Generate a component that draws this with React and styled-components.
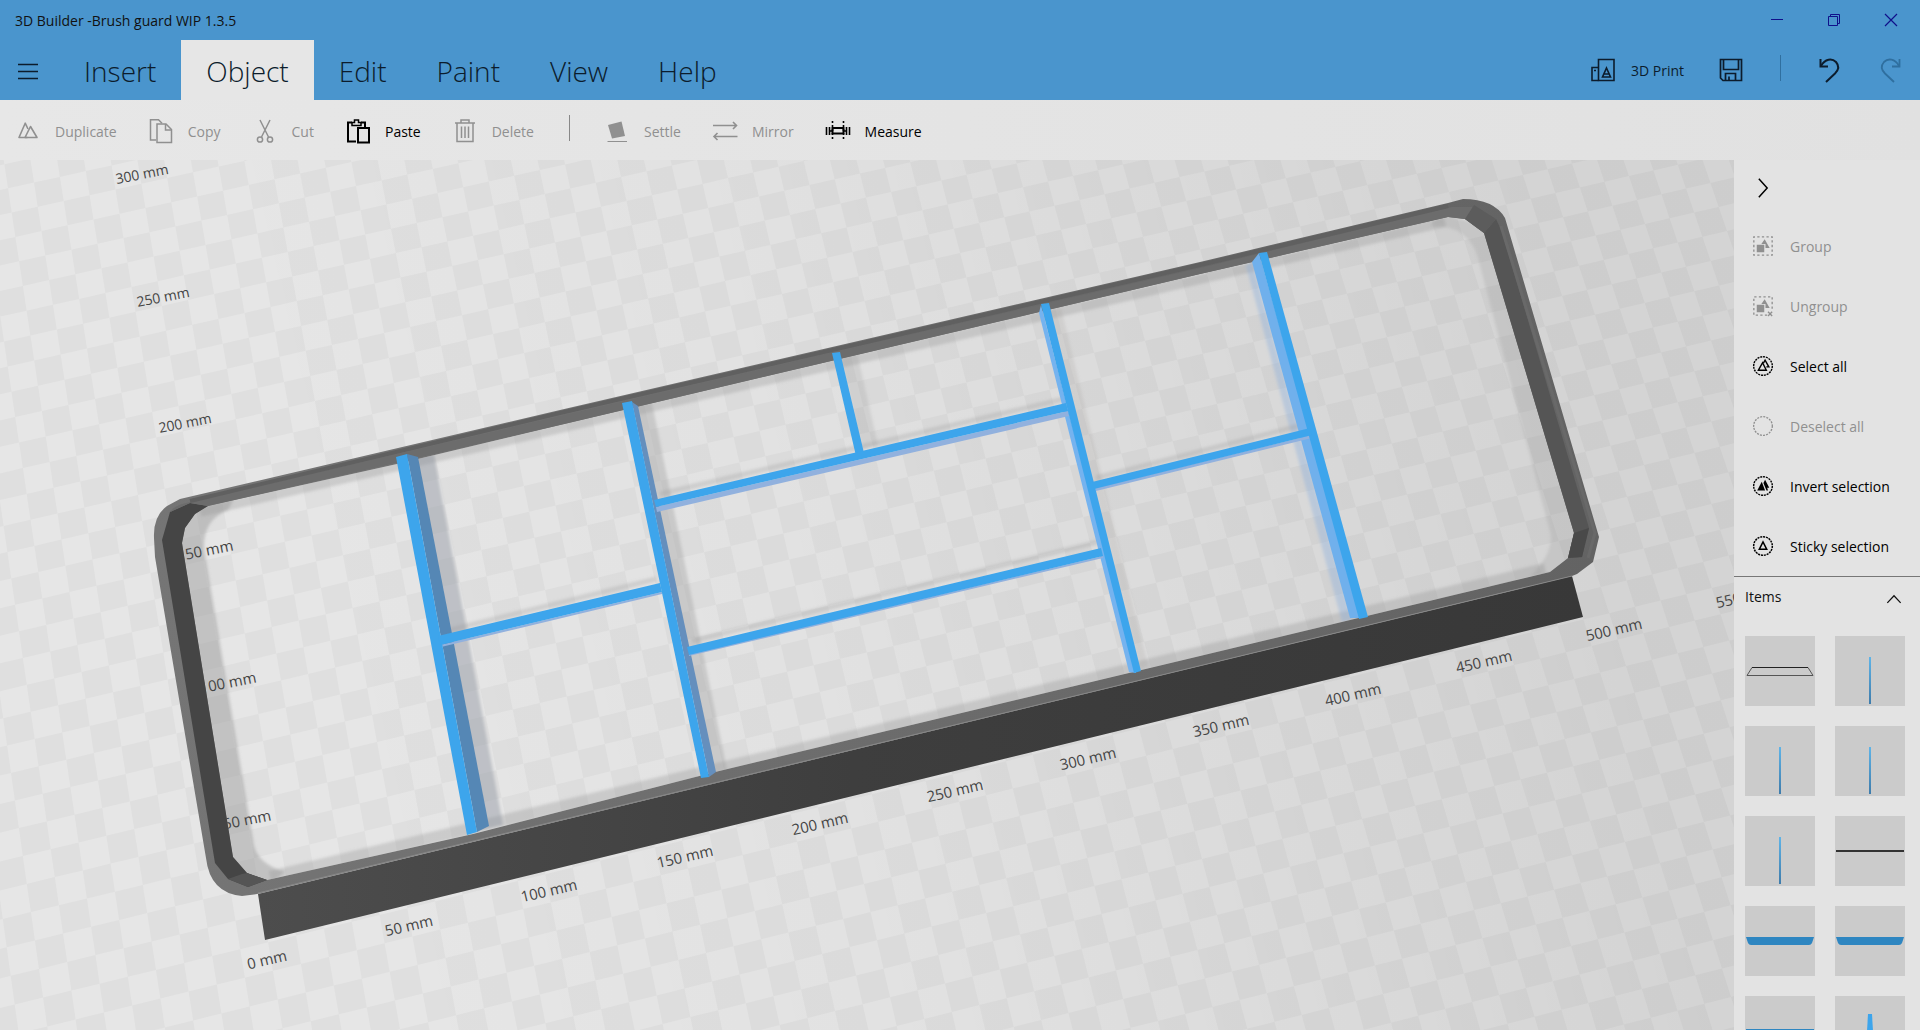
import React from "react";
import styled, { createGlobalStyle } from "styled-components";

const tabs = ["Insert", "Object", "Edit", "Paint", "View", "Help"];

const icons = {
  duplicate: (
    <g fill="none" stroke="currentColor" strokeWidth="1.6" strokeLinejoin="round">
      <path d="M11.5 18.5H3L9.2 4.2L12 10" />
      <path d="M9 18.5L14.5 7.5L21 18.5Z" />
    </g>
  ),
  copy: (
    <g fill="none" stroke="currentColor" strokeWidth="1.5">
      <path d="M7 21H1.5V.8H9.5L13 4.2" />
      <path d="M8 5H17L22.5 10.5V23.5H8Z" />
      <path d="M16.5 5V11H22.5" />
    </g>
  ),
  cut: (
    <g fill="none" stroke="currentColor" strokeWidth="1.5">
      <path d="M7 1L15.5 18M17 1L8.5 18" />
      <circle cx="7" cy="20.5" r="2.6" />
      <circle cx="17" cy="20.5" r="2.6" />
    </g>
  ),
  paste: (
    <g fill="none" stroke="currentColor" strokeWidth="2">
      <path d="M10 22.5H2V3.5H6M15 3.5H19V8" />
      <path d="M6 6.5V3.5H8.5V1H12.5V3.5H15V6.5Z" strokeWidth="1.5" />
      <path d="M12 9H23V23.5H12Z" />
    </g>
  ),
  delete: (
    <g fill="none" stroke="currentColor" strokeWidth="1.5">
      <path d="M2 4H22M8 4V1H16V4M4 4V22.5H20V4" />
      <path d="M8.500 7.500V19M12 7.500V19M15.500 7.500V19" />
    </g>
  ),
  settle: (
    <g>
      <path d="M3 6L16.500 2.500L20 17L7 19.500Z" fill="currentColor" />
      <path d="M2.500 22.500H22" stroke="currentColor" strokeWidth="1" />
    </g>
  ),
  mirror: (
    <g fill="none" stroke="currentColor" strokeWidth="1.6">
      <path d="M0 6.500H23.500M20 3L23.500 6.500L20 10" />
      <path d="M24.500 17.500H1M4.500 14L1 17.500L4.500 21" />
    </g>
  ),
  measure: (
    <g fill="none" stroke="currentColor">
      <path d="M6.500 9H17.500V14.500H6.500Z" strokeWidth="2" />
      <path d="M.5 8V16M3.500 8V16M20.500 8V16M23.500 8V16" strokeWidth="1.6" />
      <path d="M6.500 2V22M17.500 2V22" strokeWidth="1.6" strokeDasharray="2 2" />
      <path d="M3 12H6M18 12H21" strokeWidth="1.6" />
    </g>
  ),
  print: (
    <g fill="none" stroke="currentColor" strokeWidth="1.6">
      <path d="M7.500 1.500H23V22.500H7.500Z" />
      <path d="M7.500 9.500H1V22.500H7.500M3 12.500H5" />
      <path d="M15.500 10L19.500 19H11.500ZM13 16H18" />
    </g>
  ),
  save: (
    <g fill="none" stroke="currentColor" strokeWidth="1.7">
      <path d="M1.500 1.500H22.500V22.500H4L1.500 20Z" />
      <path d="M4.500 2V11.500H19.500V2" />
      <path d="M6.500 22.500V15.500H16.500V22.500M10 18.500V22.500" />
    </g>
  ),
  undo: (
    <g fill="none" stroke="currentColor" strokeWidth="2">
      <path d="M2.500 1V8.500H10" />
      <path d="M3 8C7 .5 14 0 18 4C21.500 8 20.500 12 17 15.500L8 24" />
    </g>
  ),
  redo: (
    <g fill="none" stroke="currentColor" strokeWidth="1.8">
      <path d="M21.500 1V8.500H14" />
      <path d="M21 8C17 .5 10 0 6 4C2.500 8 3.500 12 7 15.500L16 24" />
    </g>
  ),
  group: (
    <g>
      <path d="M1 1H23V23H1Z" fill="none" stroke="currentColor" strokeWidth="1.6" strokeDasharray="2.750 2.750" strokeDashoffset="1.370" />
      <path d="M4.500 10.500H13.500V19.500H4.500ZM10 9.500L14 4L20 14.500H15V9.500Z" fill="currentColor" />
    </g>
  ),
  ungroup: (
    <g>
      <path d="M17 23H1V1H23V17" fill="none" stroke="currentColor" strokeWidth="1.6" strokeDasharray="2.750 2.750" />
      <path d="M4.500 10.500H13.500V19.500H4.500ZM10 9.500L14 4L20 14.500H15V9.500Z" fill="currentColor" />
      <path d="M18 19L23 24M23 19L18 24" stroke="currentColor" strokeWidth="1.6" />
    </g>
  ),
  selectAll: (
    <g fill="none" stroke="currentColor" strokeWidth="1.7">
      <circle cx="12" cy="12" r="11.200" strokeDasharray="2.500 1" />
      <path d="M6.500 17L11.500 8L16 17Z" />
      <path d="M12.500 8.500L14.500 5L19 13H16" />
    </g>
  ),
  deselectAll: (
    <circle cx="12" cy="12" r="11.200" fill="none" stroke="currentColor" strokeWidth="1.6" strokeDasharray="2.400 1.370" />
  ),
  invert: (
    <g>
      <circle cx="12" cy="12" r="11.200" fill="none" stroke="currentColor" strokeWidth="1.7" strokeDasharray="2.500 1" />
      <path d="M5 17.500L10.500 7L14.500 17.500Z" fill="currentColor" />
      <path d="M12.500 8.500L14.500 4.500L19.500 14H17L18 17.500H16.200Z" fill="currentColor" />
    </g>
  ),
  sticky: (
    <g fill="none" stroke="currentColor" strokeWidth="1.8">
      <circle cx="12" cy="12" r="11.200" strokeDasharray="2.500 1" />
      <path d="M7.500 16L12 7L16.500 16Z" />
    </g>
  ),
  chevronRight: <path d="M7 1L17 12L7 23" fill="none" stroke="currentColor" strokeWidth="1.8" />,
  chevronUp: <path d="M4 19L12 10.500L20 19" fill="none" stroke="currentColor" strokeWidth="1.5" />,
  hamburger: <path d="M2 6.500H22M2 13.500H22M2 20.500H22" stroke="currentColor" strokeWidth="1.3" />,
  minimize: <path d="M5 11.500H17" stroke="currentColor" strokeWidth="1" />,
  restore: (
    <g fill="none" stroke="currentColor" strokeWidth="1">
      <path d="M5.500 8.500H14.500V17.500H5.500Z" />
      <path d="M7.500 8.500V6.500H16.500V15.500H14.500" />
    </g>
  ),
  close: <path d="M5 6L17 18M17 6L5 18" stroke="currentColor" strokeWidth="1.2" />
};

const editTools = [
  { icon: "duplicate", label: "Duplicate", disabled: true },
  { icon: "copy", label: "Copy", disabled: true },
  { icon: "cut", label: "Cut", disabled: true },
  { icon: "paste", label: "Paste" },
  { icon: "delete", label: "Delete", disabled: true }
];

const objectTools = [
  { icon: "settle", label: "Settle", disabled: true },
  { icon: "mirror", label: "Mirror", disabled: true },
  { icon: "measure", label: "Measure" }
];

const panelActions = [
  { icon: "group", label: "Group", disabled: true },
  { icon: "ungroup", label: "Ungroup", disabled: true },
  { icon: "selectAll", label: "Select all" },
  { icon: "deselectAll", label: "Deselect all", disabled: true },
  { icon: "invert", label: "Invert selection" },
  { icon: "sticky", label: "Sticky selection" }
];

const items = ["frame", "rod", "rod", "rod", "rod", "bar", "plate", "plate", "slab", "spike"];

// The ground plane, in units of 10 mm, projected to the canvas
const project = (x, y) => {
  const u = x / 5;
  const v = y / 5;
  const d = 1 + 0.0042 * u + 0.0148 * v;
  return [
    (271 + 141.1 * u - 19.8 * v) / d,
    (959.4 - 30.4 * u - 128.3 * v) / d
  ];
};

const point = (x, y) =>
  project(x, y)
    .map(n => n.toFixed(1))
    .join(" ");

const buildChecker = () => {
  const cells = [];
  for (let i = -16; i < 72; i++) {
    for (let j = -24; j < 52; j++) {
      if ((i + j) % 2 === 0) continue;
      const y = j + 0.6;
      cells.push(
        `M${point(i, y)}L${point(i + 1, y)}L${point(i + 1, y + 1)}L${point(i, y + 1)}Z`
      );
    }
  }
  return cells.join("");
};

const checker = buildChecker();

const farLabels = [
  [142, 174, "300 mm"],
  [163, 297, "250 mm"],
  [185, 423, "200 mm"]
];

// these lie on the floor, partly behind the frame
const nearLabels = [
  [205, 551, "150 mm"],
  [228, 683, "100 mm"],
  [247, 820, "50 mm"]
];

const widthLabels = [
  [267, 960, "0 mm"],
  [409, 926, "50 mm"],
  [549, 891, "100 mm"],
  [685, 857, "150 mm"],
  [820, 824, "200 mm"],
  [955, 791, "250 mm"],
  [1088, 759, "300 mm"],
  [1221, 726, "350 mm"],
  [1353, 695, "400 mm"],
  [1484, 662, "450 mm"],
  [1614, 630, "500 mm"],
  [1744, 597, "550 mm"]
];

const floor =
  "M208 506L397 464L560 425L1200 274L1448 217L1465 219L1484 233L1574 533L1568 558L1550 572L1200 656L715 772L473 834L267 880L247 873L233 857L182 543L185 528L195 514Z";

function Icon({ name, size = 24 }) {
  return (
    <svg width={size} height={size} viewBox="0 0 24 24" overflow="visible" aria-hidden="true">
      {icons[name]}
    </svg>
  );
}

function AxisLabels({ labels, size, angle }) {
  return (
    <SceneText $size={size}>
      {labels.map(([x, y, text]) => (
        <text key={text} x={x} y={y + 5} transform={`rotate(${angle} ${x} ${y})`}>
          {text}
        </text>
      ))}
    </SceneText>
  );
}

function Scene() {
  return (
    <SceneSvg viewBox="0 160 1734 870" preserveAspectRatio="xMinYMin slice">
      <defs>
        <linearGradient id="shade" gradientUnits="userSpaceOnUse" x1="300" y1="620" x2="1560" y2="330">
          <stop offset="0" stopColor="#000" stopOpacity="0" />
          <stop offset="0.4" stopColor="#000" stopOpacity="0.02" />
          <stop offset="1" stopColor="#000" stopOpacity="0.08" />
        </linearGradient>
        <linearGradient id="front" x1="0" x2="1">
          <stop offset="0" stopColor="#4d4d4d" />
          <stop offset="0.45" stopColor="#3e3e3e" />
          <stop offset="1" stopColor="#383838" />
        </linearGradient>
        <linearGradient id="rim" x1="0" x2="1">
          <stop offset="0" stopColor="#757575" />
          <stop offset="1" stopColor="#636363" />
        </linearGradient>
        <filter id="soft" x="-5%" y="-5%" width="110%" height="110%">
          <feGaussianBlur stdDeviation="1.5" />
        </filter>
        <clipPath id="floorClip">
          <path d={floor} />
        </clipPath>
      </defs>

      <rect x="0" y="160" width="1735" height="870" fill="#e6e6e6" />
      <path d={checker} fill="#dfdfdf" />
      <rect x="0" y="160" width="1735" height="870" fill="url(#shade)" />

      {/* shadows on the ground */}
      <g clipPath="url(#floorClip)">
        <g filter="url(#soft)">
          <path d="M170 500L234 498L228 510Q203 520 204 548L254 845Q258 864 285 872L262 890L225 870L178 540Z" fill="#888" fillOpacity="0.38" />
          <path d="M1440 214L1492 228L1580 535L1570 570L1530 577Q1557 550 1549 528L1478 258Q1468 224 1430 226Z" fill="#999" fillOpacity="0.25" />
          <path d="M200 512L1445 222" stroke="#909090" strokeOpacity="0.3" strokeWidth="10" />
          <path d="M270 877L1545 569" stroke="#909090" strokeOpacity="0.3" strokeWidth="12" />
          <path d="M414 455L434 455L503 825L480 830Z" fill="#8e949f" fillOpacity="0.45" />
          <path d="M636 403L652 403L727 770L712 774Z" fill="#989898" fillOpacity="0.34" />
          <path d="M840 355L857 353L878 445L862 450Z" fill="#989898" fillOpacity="0.22" />
          <path d="M1049 310L1061 308L1148 666L1140 669Z" fill="#a09a96" fillOpacity="0.2" />
          <path d="M1252 262L1246 266L1342 622L1352 620Z" fill="#8cb0dc" fillOpacity="0.4" />
          <path d="M442 632L656 579M660 494L1064 399M692 641L1098 542M1096 478L1306 424" stroke="#989898" strokeOpacity="0.28" strokeWidth="5" />
        </g>
      </g>

      <AxisLabels labels={farLabels} size={14} angle={-11} />
      <AxisLabels labels={nearLabels} size={15} angle={-11} />

      {/* frame */}
      <path
        d={`M180 499L167 506Q153 516 154 538L155 557L206 858Q210 893 242 896L257 894L1572 576L1577 574L1593 562L1599 537L1505 218Q1494 199 1463 199L1448 203L1200 262L560 410Z${floor}`}
        fill="url(#rim)"
        fillRule="evenodd"
      />
      <path d="M190 503L170 512L162 540L215 863L228 879L248 887L267 880L247 873L233 857L182 543L185 528L195 514L208 506Z" fill="#454545" />
      <path d="M190 503L170 512Q173 507 182 504L560 416L1200 268L1452 207L1472 207L1489 216L1484 233L1465 219L1448 217L1200 274L560 425L208 506Z" fill="#6c6c6c" />
      <path d="M190 501L560 413L1200 265L1448 206" fill="none" stroke="#606060" strokeWidth="4" />
      <path d="M228 879L248 887L267 880L247 873L242 874Z" fill="#555" />
      <path d="M1484 233L1496 219L1502 232L1589 528L1582 557L1568 558L1574 533Z" fill="#555" />
      <path d="M1465 219L1474 205L1496 219L1484 233Z" fill="#5c5c5c" />
      <path d="M1574 533L1589 528L1582 557L1568 558Z" fill="#494949" />
      <path d="M1501 226L1595 533L1588 558" fill="none" stroke="#696969" strokeWidth="3" />
      <path d="M258 894L265 940L1583 617L1572 576Z" fill="url(#front)" />
      <path d="M258 893L1572 576" stroke="#888" strokeWidth="1" />

      {/* side faces of the dividers */}
      <path d="M407 454L418 457L489 826L477 832Z" fill="#5587b5" />
      <path d="M632 402L638 406L716 772L709 777Z" fill="#658fbd" />
      <path d="M1041 305L1039 313L1129 672L1136 673Z" fill="#75b3ef" />
      <path d="M1259 253L1252 262L1350 618L1361 618Z" fill="#70b0ec" />
      <path d="M440 645L662 592L662 594L441 647ZM656 507L1068 411L1069 416L657 512ZM689 654L1103 556V558L689 656ZM1095 488L1312 435V438L1096 491Z" fill="#91b1de" />

      {/* top faces */}
      <g fill="#3da5ec">
        <path d="M396 457L407 454L477 832L467 835Z" />
        <path d="M622 403L632 401L709 777L701 778Z" />
        <path d="M832 353L840 352L864 453L856 456Z" />
        <path d="M1041 304L1049 303L1141 671L1134 673Z" />
        <path d="M1259 253L1267 252L1368 617L1359 619Z" />
        <path d="M438 636L660 583L662 592L440 645Z" />
        <path d="M654 500L1066 403L1068 411L656 507Z" />
        <path d="M687 647L1101 548L1103 556L689 655Z" />
        <path d="M1092 482L1310 428L1312 435L1094 489Z" />
      </g>

      <AxisLabels labels={widthLabels} size={15} angle={-13} />
    </SceneSvg>
  );
}

function Thumbnail({ kind }) {
  return (
    <svg width="70" height="70" viewBox="0 0 70 70" aria-hidden="true">
      {kind === "frame" && (
        <g fill="none" stroke="#555">
          <path d="M7 31.500L2 39.500H68L63 31.500" />
          <path d="M7 31.500H63" stroke="#222" />
        </g>
      )}
      {kind === "rod" && <rect x="34" y="21" width="2" height="47" fill="url(#rod)" />}
      {kind === "bar" && <rect x="1" y="34" width="68" height="2" fill="#333" />}
      {kind === "plate" && <path d="M1 31H69L67 37Q66 39 64 39H6Q4 39 3 37Z" fill="#2e86c1" />}
      {kind === "slab" && <rect x="1" y="33" width="68" height="5" fill="#2e86c1" />}
      {kind === "spike" && <path d="M33 18H37L40 70H30Z" fill="#3da5ec" />}
      <defs>
        <linearGradient id="rod" x1="0" y1="0" x2="0" y2="1">
          <stop offset="0" stopColor="#5fb4e8" />
          <stop offset="1" stopColor="#3f7cab" />
        </linearGradient>
      </defs>
    </svg>
  );
}

export default function App() {
  return (
    <React.Fragment>
      <GlobalStyle />
      <Window>
        <TitleBar>
          <Title>3D Builder -Brush guard WIP 1.3.5</Title>
          <WindowButton aria-label="Minimize">
            <Icon name="minimize" />
          </WindowButton>
          <WindowButton aria-label="Restore">
            <Icon name="restore" />
          </WindowButton>
          <WindowButton aria-label="Close">
            <Icon name="close" />
          </WindowButton>
        </TitleBar>

        <MenuBar>
          <MenuButton aria-label="Menu">
            <Icon name="hamburger" />
          </MenuButton>
          <Tabs>
            {tabs.map(tab => (
              <Tab key={tab} $active={tab === "Object"}>
                {tab}
              </Tab>
            ))}
          </Tabs>
          <PrintButton>
            <Icon name="print" />
            3D Print
          </PrintButton>
          <IconButton aria-label="Save">
            <Icon name="save" />
          </IconButton>
          <MenuDivider />
          <IconButton aria-label="Undo">
            <Icon name="undo" />
          </IconButton>
          <IconButton aria-label="Redo" disabled>
            <Icon name="redo" />
          </IconButton>
        </MenuBar>

        <Toolbar>
          {editTools.map(tool => (
            <ToolButton key={tool.label} disabled={tool.disabled}>
              <Icon name={tool.icon} />
              {tool.label}
            </ToolButton>
          ))}
          <ToolDivider />
          {objectTools.map(tool => (
            <ToolButton key={tool.label} disabled={tool.disabled}>
              <Icon name={tool.icon} />
              {tool.label}
            </ToolButton>
          ))}
        </Toolbar>

        <Workspace>
          <Canvas>
            <Scene />
          </Canvas>
          <Panel>
            <PanelButton aria-label="Collapse panel">
              <Icon name="chevronRight" size={20} />
            </PanelButton>
            {panelActions.map(action => (
              <PanelButton key={action.label} disabled={action.disabled}>
                <Icon name={action.icon} size={20} />
                {action.label}
              </PanelButton>
            ))}
            <ItemsHeader>
              Items
              <Icon name="chevronUp" size={20} />
            </ItemsHeader>
            <ItemGrid>
              {items.map((kind, index) => (
                <Item key={index} aria-label={`Item ${index + 1}`}>
                  <Thumbnail kind={kind} />
                </Item>
              ))}
            </ItemGrid>
          </Panel>
        </Workspace>
      </Window>
    </React.Fragment>
  );
}

const GlobalStyle = createGlobalStyle`
  * {
    box-sizing: border-box;
  }
  body {
    margin: 0;
    overflow: hidden;
    font-family: "Open Sans", "Noto Sans", sans-serif;
    font-size: 14px;
    color: #111;
  }
  button {
    margin: 0;
    padding: 0;
    border: 0;
    background: none;
    font: inherit;
    color: inherit;
  }
  svg {
    display: block;
    flex: none;
  }
`;

const Window = styled.div`
  display: flex;
  flex-direction: column;
  height: 100vh;
  background: #e6e6e6;
`;

const TitleBar = styled.header`
  display: flex;
  align-items: center;
  height: 40px;
  background: #4a95cd;
`;

const Title = styled.div`
  flex: 1;
  padding-left: 15px;
`;

const WindowButton = styled.button`
  display: flex;
  align-items: center;
  justify-content: center;
  width: 57px;
  height: 40px;
  color: #10108a;
`;

const MenuBar = styled.nav`
  display: flex;
  align-items: center;
  height: 60px;
  background: #4a95cd;
  color: #0c1c2c;
`;

const MenuButton = styled.button`
  display: flex;
  align-items: center;
  justify-content: center;
  width: 56px;
  height: 60px;
  margin-right: 3px;
`;

const Tabs = styled.div`
  display: flex;
  flex: 1;
  height: 100%;
`;

const Tab = styled.button`
  padding: 2px 25px 0;
  font-size: 28px;
  font-weight: 300;
  background: ${props => (props.$active ? "#e6e6e6" : "transparent")};
`;

const PrintButton = styled.button`
  display: flex;
  align-items: center;
  gap: 16px;
  height: 60px;
  margin-right: 17px;
`;

const IconButton = styled.button`
  display: flex;
  align-items: center;
  justify-content: center;
  width: 60px;
  height: 60px;
  &:disabled {
    color: #2f6f9f;
  }
`;

const MenuDivider = styled.div`
  width: 1px;
  height: 26px;
  margin: 0 19px 4px;
  background: #2f6f9f;
`;

const Toolbar = styled.div`
  display: flex;
  align-items: center;
  height: 60px;
  background: linear-gradient(90deg, #e7e7e7, #e1e1e1);
`;

const ToolButton = styled.button`
  display: flex;
  align-items: center;
  gap: 15px;
  height: 60px;
  padding: 2px 16px 0;
  color: #000;
  &:disabled {
    color: #909090;
  }
`;

const ToolDivider = styled.div`
  width: 1px;
  height: 26px;
  margin: 0 19px 4px;
  background: #888;
`;

const Workspace = styled.div`
  display: flex;
  flex: 1;
  min-height: 0;
`;

const Canvas = styled.main`
  flex: 1;
  min-width: 0;
  overflow: hidden;
`;

const SceneSvg = styled.svg`
  width: 100%;
  height: 100%;
`;

const SceneText = styled.g`
  font-size: ${props => props.$size}px;
  fill: #444;
  text-anchor: middle;
`;

const Panel = styled.aside`
  width: 186px;
  overflow: hidden;
  background: #e3e3e3;
`;

const PanelButton = styled.button`
  display: flex;
  align-items: center;
  gap: 17px;
  width: 100%;
  height: 60px;
  padding-left: 19px;
  color: #000;
  white-space: nowrap;
  &:first-child {
    height: 56px;
  }
  &:disabled {
    color: #909090;
  }
`;

const ItemsHeader = styled.button`
  display: flex;
  align-items: center;
  justify-content: space-between;
  width: 100%;
  height: 40px;
  padding: 0 16px 0 11px;
  border-top: 1px solid #777;
`;

const ItemGrid = styled.div`
  display: grid;
  grid-template-columns: repeat(2, 70px);
  gap: 20px;
  padding: 20px 11px;
`;

const Item = styled.button`
  height: 70px;
  background: #cbcbcb;
`;
